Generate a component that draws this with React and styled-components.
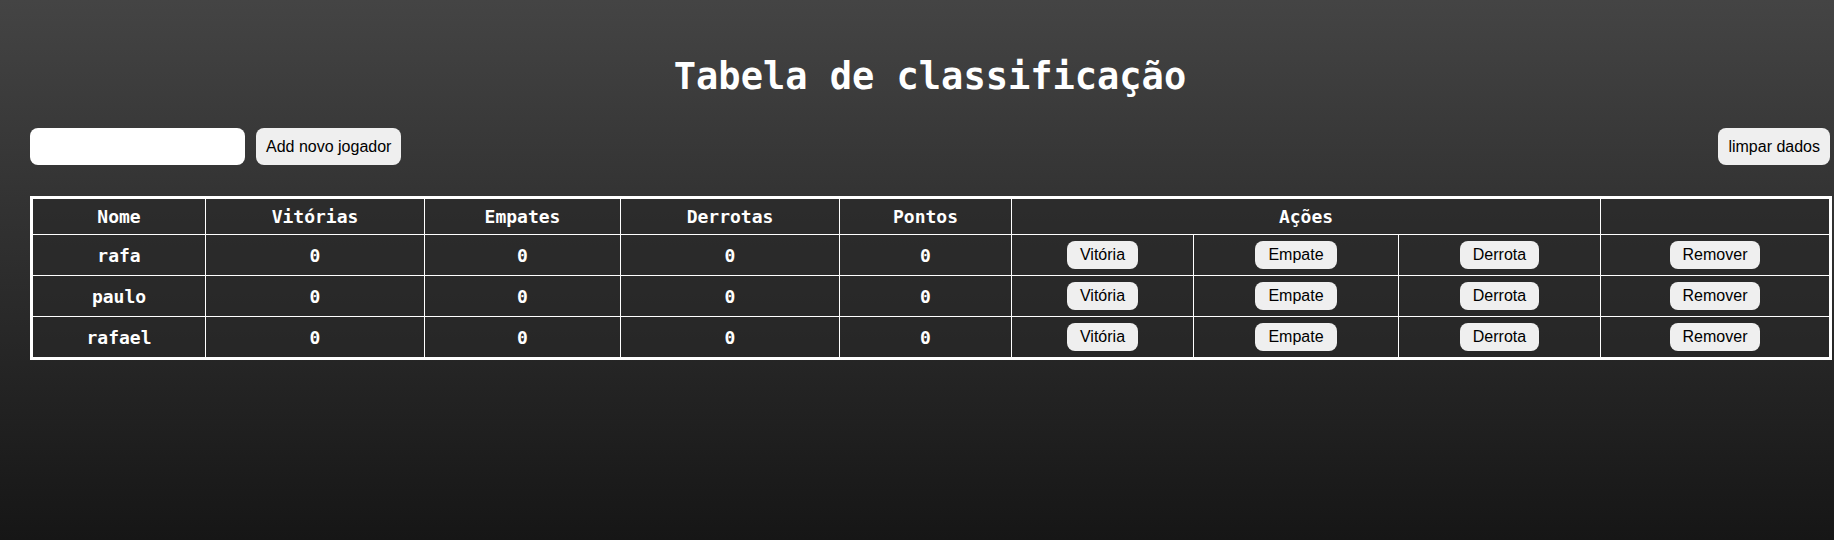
import React, { useState } from 'react';
import styled, { createGlobalStyle } from 'styled-components';

const GlobalStyle = createGlobalStyle`
  html, body {
    margin: 0;
    padding: 0;
  }

  body {
    min-height: 100vh;
    background: linear-gradient(to bottom, #444444 0%, #161616 100%);
    color: #ffffff;
  }
`;

const Page = styled.div`
  min-height: 100vh;
  box-sizing: border-box;
  padding: 56px 4px 0 30px;
  font-family: "DejaVu Sans Mono", "Liberation Mono", monospace;
`;

const Title = styled.h1`
  margin: 0;
  font-size: 37px;
  line-height: 42px;
  font-weight: bold;
  text-align: center;
  color: #ffffff;
`;

const Toolbar = styled.div`
  display: flex;
  align-items: center;
  justify-content: space-between;
  margin-top: 30px;
`;

const AddGroup = styled.div`
  display: flex;
  align-items: center;
  gap: 11px;
`;

const NameInput = styled.input`
  width: 215px;
  height: 37px;
  box-sizing: border-box;
  border: none;
  border-radius: 8px;
  padding: 0 8px;
  background: #ffffff;
  font-family: "Liberation Sans", Arial, sans-serif;
  font-size: 16px;
  outline: none;
`;

const Button = styled.button`
  border: none;
  border-radius: 8px;
  background: #efefef;
  color: #000000;
  font-family: "Liberation Sans", Arial, sans-serif;
  font-size: 16px;
  line-height: 18px;
  padding: ${props => (props.$small ? '5px 13px' : '9.5px 10px')};
  cursor: pointer;

  &:hover {
    background: #e2e2e2;
  }
`;

const Table = styled.table`
  width: 100%;
  margin-top: 31px;
  border-collapse: collapse;
  table-layout: fixed;
  border: 3px solid #ffffff;
`;

const Col = styled.col`
  width: ${props => props.$w}px;
`;

const HeadCell = styled.th`
  border: 1px solid #ffffff;
  background: rgba(40, 40, 40, 0.6);
  padding: 7px 4px;
  font-size: 18px;
  line-height: 21px;
  font-weight: bold;
  text-align: center;
`;

const Cell = styled.td`
  border: 1px solid #ffffff;
  background: rgba(40, 40, 40, 0.6);
  padding: 6px 4px;
  font-size: 18px;
  line-height: 21px;
  font-weight: bold;
  text-align: center;
  vertical-align: middle;
`;

const colWidths = [174, 219, 196, 219, 172, 182, 205, 202, 230];

const initialPlayers = [
  { name: 'rafa', wins: 0, draws: 0, losses: 0 },
  { name: 'paulo', wins: 0, draws: 0, losses: 0 },
  { name: 'rafael', wins: 0, draws: 0, losses: 0 },
];

function App() {
  const [players, setPlayers] = useState(initialPlayers);
  const [newName, setNewName] = useState('');

  const addPlayer = () => {
    if (!newName.trim()) return;
    setPlayers([...players, { name: newName.trim(), wins: 0, draws: 0, losses: 0 }]);
    setNewName('');
  };

  const update = (index, field) => {
    setPlayers(players.map((p, i) => (i === index ? { ...p, [field]: p[field] + 1 } : p)));
  };

  const remove = (index) => {
    setPlayers(players.filter((_, i) => i !== index));
  };

  return (
    <>
      <GlobalStyle />
      <Page>
        <Title>Tabela de classificação</Title>

        <Toolbar>
          <AddGroup>
            <NameInput value={newName} onChange={(e) => setNewName(e.target.value)} />
            <Button onClick={addPlayer}>Add novo jogador</Button>
          </AddGroup>
          <Button onClick={() => setPlayers([])}>limpar dados</Button>
        </Toolbar>

        <Table>
          <colgroup>
            {colWidths.map((w, i) => (
              <Col key={i} $w={w} />
            ))}
          </colgroup>
          <thead>
            <tr>
              <HeadCell>Nome</HeadCell>
              <HeadCell>Vitórias</HeadCell>
              <HeadCell>Empates</HeadCell>
              <HeadCell>Derrotas</HeadCell>
              <HeadCell>Pontos</HeadCell>
              <HeadCell colSpan={3}>Ações</HeadCell>
              <HeadCell />
            </tr>
          </thead>
          <tbody>
            {players.map((p, i) => (
              <tr key={p.name + i}>
                <Cell>{p.name}</Cell>
                <Cell>{p.wins}</Cell>
                <Cell>{p.draws}</Cell>
                <Cell>{p.losses}</Cell>
                <Cell>{p.wins * 3 + p.draws}</Cell>
                <Cell>
                  <Button $small onClick={() => update(i, 'wins')}>Vitória</Button>
                </Cell>
                <Cell>
                  <Button $small onClick={() => update(i, 'draws')}>Empate</Button>
                </Cell>
                <Cell>
                  <Button $small onClick={() => update(i, 'losses')}>Derrota</Button>
                </Cell>
                <Cell>
                  <Button $small onClick={() => remove(i)}>Remover</Button>
                </Cell>
              </tr>
            ))}
          </tbody>
        </Table>
      </Page>
    </>
  );
}

export default App;
